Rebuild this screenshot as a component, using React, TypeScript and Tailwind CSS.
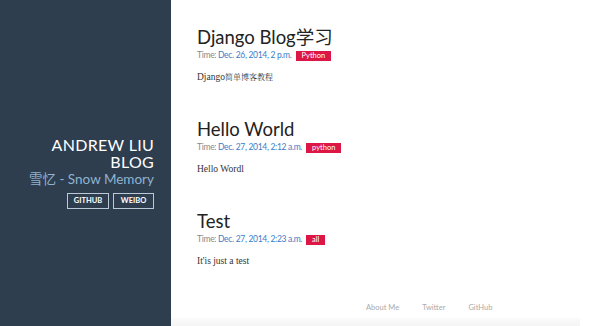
import React from "react";

const posts = [
  { title: "Django Blog学习", date: "Dec. 26, 2014, 2 p.m.", tag: "Python", body: <>Django<span className="text-[8px]">简单博客教程</span></> },
  { title: "Hello World", date: "Dec. 27, 2014, 2:12 a.m.", tag: "python", body: <>Hello Wordl</> },
  { title: "Test", date: "Dec. 27, 2014, 2:23 a.m.", tag: "all", body: <>It'is just a test</> },
];

const sans = "font-['Lato','Noto_Sans_CJK_SC',sans-serif]";

export default function App() {
  return (
    <div className={`flex w-[600px] h-[326px] overflow-hidden bg-white ${sans}`}>
      <aside className="w-[171px] shrink-0 bg-[#2e3e4f] flex flex-col items-end pr-[17px] pt-[136px]">
        <h1 className="text-white text-[16px] leading-[17px] text-right tracking-[0.3px]">
          ANDREW LIU
          <br />
          BLOG
        </h1>
        <div className="text-[#8fb3d1] text-[13.5px] leading-[16px] mt-[1px] text-right">雪忆 - Snow Memory</div>
        <div className="flex gap-[4px] mt-[6px]">
          <span className="border border-[#b9c9d6] text-white text-[7.5px] font-bold h-[16px] w-[42px] flex items-center justify-center">GITHUB</span>
          <span className="border border-[#b9c9d6] text-white text-[7.5px] font-bold h-[16px] w-[41px] flex items-center justify-center">WEIBO</span>
        </div>
      </aside>
      <main className="flex-1 flex flex-col">
        <div className="flex flex-col pt-[25px] pl-[26px] gap-[37px]">
          {posts.map((p) => (
            <article key={p.title} className="flex flex-col h-[55px]">
              <h2 className="text-[18.5px] leading-[24px] text-[#222]">{p.title}</h2>
              <div className="flex items-center text-[8.5px] leading-[11px] mt-[1px] tracking-[-0.3px]">
                <span className="text-[#888]">Time:&nbsp;</span>
                <span className="text-[#3d7cc9]">{p.date}</span>
                <span className="ml-[4px] bg-[#dc1645] text-white text-[7.5px] leading-[10px] px-[6px] min-w-[19px] text-center tracking-normal">{p.tag}</span>
              </div>
              <p className="font-['Liberation_Serif','Noto_Serif_CJK_SC','Noto_Sans_CJK_SC',serif] text-[9.5px] leading-[12px] text-[#333] mt-[10px]">{p.body}</p>
            </article>
          ))}
        </div>
        <footer className="mt-auto flex flex-col">
          <div className="flex pl-[195px] gap-[23px] text-[7.5px] leading-[10px] text-[#aaa] pb-[5px]">
            <span>About Me</span>
            <span>Twitter</span>
            <span>GitHub</span>
          </div>
          <div className="h-[8px] mr-[20px] bg-gradient-to-b from-[#fbfbfb] to-[#f4f4f4]" />
        </footer>
      </main>
    </div>
  );
}
